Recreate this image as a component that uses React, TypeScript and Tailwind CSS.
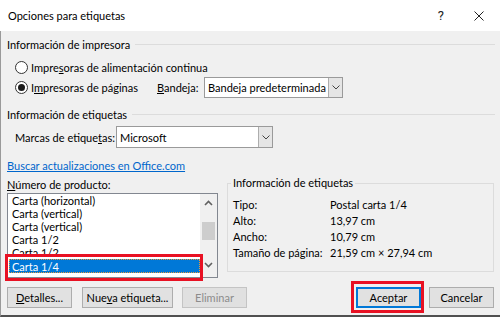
import React from "react";

function Chevron({ up = false, className = "" }: { up?: boolean; className?: string }) {
  return (
    <svg width="9" height="6" viewBox="0 0 9 6" className={className}>
      <polyline
        points={up ? "1,5 4.5,1.5 8,5" : "1,1 4.5,4.5 8,1"}
        fill="none"
        stroke="#606060"
        strokeWidth="1.6"
      />
    </svg>
  );
}

function ComboChevron() {
  return (
    <svg width="8" height="5" viewBox="0 0 8 5">
      <polyline points="0.5,0.5 4,4 7.5,0.5" fill="none" stroke="#444" strokeWidth="1" />
    </svg>
  );
}

function Radio({ checked = false }: { checked?: boolean }) {
  return (
    <div className="w-[13px] h-[13px] rounded-full border border-[#333333] bg-white flex items-center justify-center shrink-0">
      {checked && <div className="w-[7px] h-[7px] rounded-full bg-[#1a1a1a]" />}
    </div>
  );
}

function Combo({ text, w, h }: { text: string; w: string; h: string }) {
  return (
    <div className={`${w} ${h} border border-[#9a9a9a] bg-white flex items-stretch`}>
      <div className="flex-1 flex items-center pl-[3px] whitespace-nowrap overflow-hidden">{text}</div>
      <div className="w-[14px] border-l border-[#adadad] bg-[#e5e5e5] flex items-center justify-center">
        <ComboChevron />
      </div>
    </div>
  );
}

function Btn({
  children,
  w,
  className = "",
  disabled = false,
  primary = false,
}: {
  children: React.ReactNode;
  w: string;
  className?: string;
  disabled?: boolean;
  primary?: boolean;
}) {
  const base = primary
    ? "border-2 border-[#0078d7] bg-[#e1e1e1]"
    : disabled
    ? "border border-[#c4c4c4] bg-[#e0e0e0] text-[#8c8c8c]"
    : "border border-[#adadad] bg-[#e1e1e1]";
  return (
    <div className={`${w} h-[21px] ${base} flex items-center justify-center whitespace-nowrap ${className}`}>
      {children}
    </div>
  );
}

export default function App() {
  const items = [
    "Carta (horizontal)",
    "Carta (vertical)",
    "Carta (vertical)",
    "Carta 1/2",
    "Carta 1/2",
    "Carta 1/4",
  ];
  const info: [string, string][] = [
    ["Tipo:", "Postal carta 1/4"],
    ["Alto:", "13,97 cm"],
    ["Ancho:", "10,79 cm"],
    ["Tamaño de página:", "21,59 cm × 27,94 cm"],
  ];
  return (
    <div className="w-[500px] h-[317px] bg-[#f0f0f0] flex flex-col overflow-hidden relative font-[Lato,'Noto_Sans',sans-serif] text-[11px] text-[#000000] leading-none">
      {/* Title bar */}
      <div className="h-[31px] bg-white flex items-center shrink-0">
        <div className="pl-[8px] flex-1 text-[11px]">Opciones para etiquetas</div>
        <div className="flex items-center pr-[16px] gap-[30px]">
          <span className="text-[13px] font-[Roboto,sans-serif] text-[#222]">?</span>
          <svg width="10" height="10" viewBox="0 0 10 10">
            <path d="M0.5 0.5 L9.5 9.5 M9.5 0.5 L0.5 9.5" stroke="#222" strokeWidth="1" />
          </svg>
        </div>
      </div>

      {/* Body */}
      <div className="flex-1 flex flex-col border-l border-[#9a9a9a] border-b-2 border-b-[#505050] pl-[6px]">
        <div className="mt-[5px] h-[16px] flex items-center">
          <span>Información de impresora</span>
          <div className="flex-1 h-px bg-[#dcdcdc] ml-[5px] mr-[5px]" />
        </div>

        <div className="mt-[7px] h-[16px] flex items-center pl-[8px]">
          <Radio />
          <span className="ml-[3px]">
            Impre<u>s</u>oras de alimentación continua
          </span>
        </div>

        <div className="mt-[2px] h-[21px] flex items-center pl-[8px]">
          <div className="w-[142px] flex items-center">
            <Radio checked />
            <span className="ml-[3px]">
              I<u>m</u>presoras de páginas
            </span>
          </div>
          <span className="w-[47px]">
            <u>B</u>andeja:
          </span>
          <Combo text="Bandeja predeterminada" w="w-[139px]" h="h-[21px]" />
        </div>

        <div className="mt-[8px] h-[16px] flex items-center">
          <span>Información de etiquetas</span>
          <div className="flex-1 h-px bg-[#dcdcdc] ml-[5px] mr-[5px]" />
        </div>

        <div className="mt-[4px] h-[22px] flex items-center pl-[8px]">
          <span className="w-[101px]">
            Marcas de etique<u>t</u>as:
          </span>
          <Combo text="Microsoft" w="w-[157px]" h="h-[22px]" />
        </div>

        <div className="mt-[9px] h-[16px] flex items-center">
          <span className="text-[#0066cc] underline">Buscar actualizaciones en Office.com</span>
        </div>

        <div className="mt-[3px] flex items-start">
          <div className="w-[211px] flex flex-col">
            <div className="h-[16px] flex items-center">
              <span>
                <u>N</u>úmero de producto:
              </span>
            </div>
            <div className="mt-[1px] h-[85px] border border-[#828790] bg-white flex">
              <div className="flex-1 flex flex-col pl-[1px]">
                {items.map((it, i) =>
                  i === items.length - 1 ? (
                    <div
                      key={i}
                      className="h-[14px] bg-[#0078d7] text-white flex items-center px-[2px] border border-dotted border-[#e89a3c]"
                    >
                      {it}
                    </div>
                  ) : (
                    <div key={i} className="h-[13px] flex items-center px-[3px]">
                      {it}
                    </div>
                  )
                )}
              </div>
              <div className="w-[17px] bg-[#f0f0f0] flex flex-col">
                <div className="h-[17px] flex items-center justify-center">
                  <Chevron up />
                </div>
                <div className="flex-1 flex flex-col items-center">
                  <div className="mt-[11px] w-[13px] h-[18px] bg-[#cdcdcd]" />
                </div>
                <div className="h-[17px] flex items-center justify-center">
                  <Chevron />
                </div>
                <div className="h-[4px]" />
              </div>
            </div>
          </div>

          <fieldset className="ml-[9px] -mt-[1px] w-[267px] h-[97px] border border-[#dcdcdc]">
            <legend className="ml-[3px] px-[2px] h-[16px] leading-[16px]">Información de etiquetas</legend>
            <div className="pt-[5px] pl-[5px] grid grid-cols-[97px_1fr]">
              {info.map(([k, v]) => (
                <React.Fragment key={k}>
                  <div className="h-[16px] flex items-center">{k}</div>
                  <div className="h-[16px] flex items-center">{v}</div>
                </React.Fragment>
              ))}
            </div>
          </fieldset>
        </div>

        <div className="mt-[9px] flex items-center pr-[6px]">
          <Btn w="w-[65px]">
            <span>
              <u>D</u>etalles...
            </span>
          </Btn>
          <Btn w="w-[91px]" className="ml-[10px]">
            <span>
              Nue<u>v</u>a etiqueta...
            </span>
          </Btn>
          <Btn w="w-[65px]" className="ml-[9px]" disabled>
            Eliminar
          </Btn>
          <div className="flex-1" />
          <Btn w="w-[65px]" primary>
            Aceptar
          </Btn>
          <Btn w="w-[65px]" className="ml-[8px]">
            Cancelar
          </Btn>
        </div>
      </div>

      {/* Red annotation boxes */}
      <div className="absolute left-[5px] top-[254px] w-[198px] h-[27px] border-[3px] border-[#e81123]" />
      <div className="absolute left-[351px] top-[281px] w-[73px] h-[32px] border-[3px] border-[#e81123]" />
    </div>
  );
}
